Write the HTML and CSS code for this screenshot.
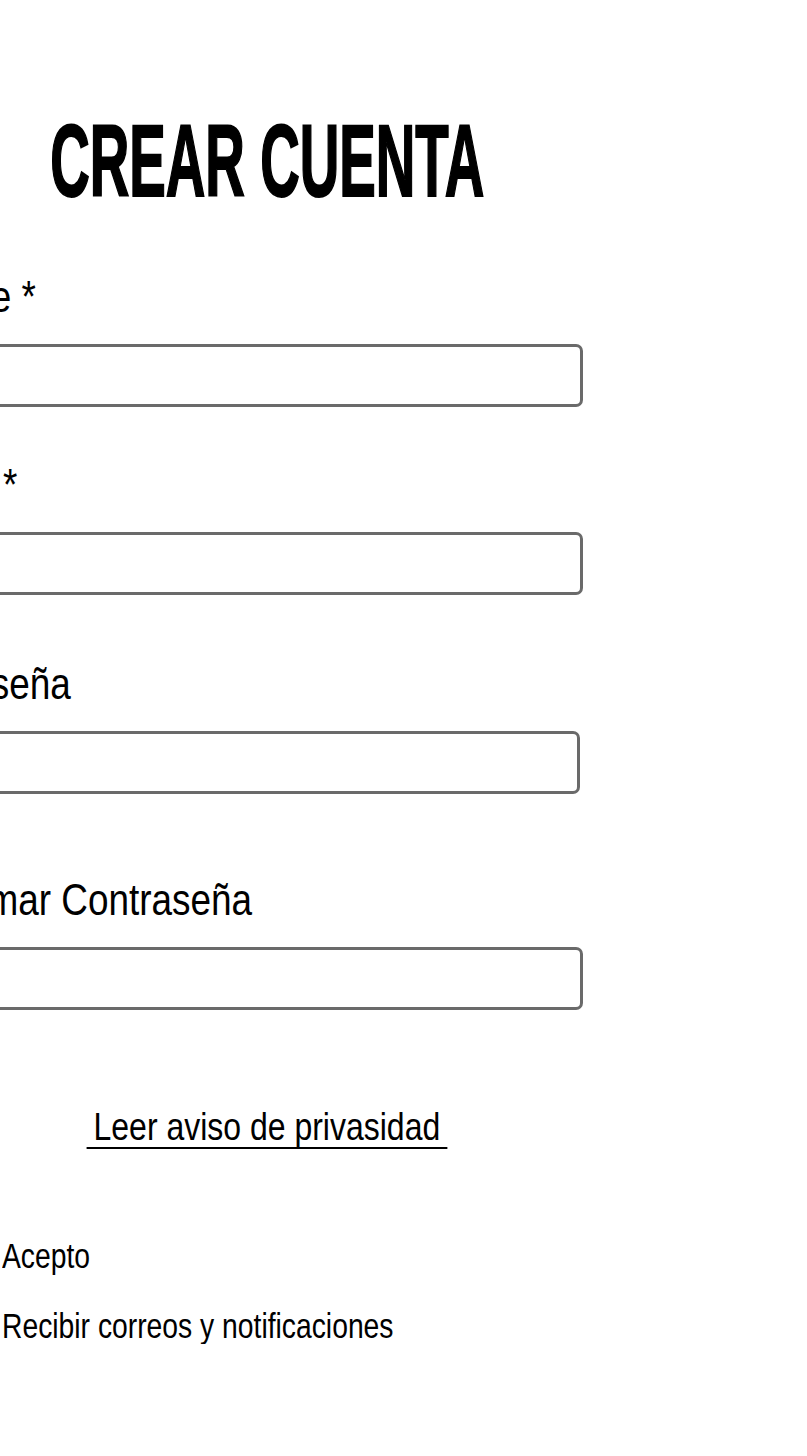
FILE: index.html
```html
<!DOCTYPE html>
<html lang="es">
<head>
<meta charset="utf-8">
<title>Crear cuenta</title>
<link rel="stylesheet" href="styles.css">
</head>
<body>
<form class="signup">
  <h1 class="signup__title"><span class="signup__title-text">CREAR CUENTA</span></h1>

  <div class="field field--name">
    <label class="field__label" for="nombre"><span class="narrow">Nombre *</span></label>
    <input class="field__input" id="nombre" type="text">
  </div>

  <div class="field field--mail">
    <label class="field__label" for="correo"><span class="narrow">Correo *</span></label>
    <input class="field__input" id="correo" type="email">
  </div>

  <div class="field field--pass">
    <label class="field__label" for="pass"><span class="narrow">Contraseña</span></label>
    <input class="field__input field__input--short" id="pass" type="password">
  </div>

  <div class="field field--confirm">
    <label class="field__label field__label--indent" for="pass2"><span class="narrow">Confirmar Contraseña</span></label>
    <input class="field__input" id="pass2" type="password">
  </div>

  <div class="privacy">
    <a class="privacy__link" href="#">Leer aviso de privasidad</a>
  </div>

  <div class="checks">
    <label class="check"><input class="check__box" type="checkbox"><span class="narrow">Acepto</span></label>
    <label class="check"><input class="check__box" type="checkbox"><span class="narrow">Recibir correos y notificaciones</span></label>
  </div>
</form>
</body>
</html>
```

FILE: styles.css
```css
html, body {
  margin: 0;
  padding: 0;
  background: #ffffff;
  overflow: hidden;
}

body {
  font-family: "Liberation Sans", Arial, sans-serif;
  color: #000000;
}

.narrow {
  display: inline-block;
  white-space: nowrap;
  transform: scaleX(0.82);
  transform-origin: left center;
}

.signup {
  width: 774px;
  margin-left: -120px;
  padding-top: 110px;
  display: flex;
  flex-direction: column;
}

.signup__title {
  margin: 0;
  display: flex;
  justify-content: center;
  white-space: nowrap;
  font-size: 102px;
  line-height: 102px;
  font-weight: 700;
  font-family: "Liberation Sans", Arial, sans-serif;
}

.signup__title-text {
  display: inline-block;
  flex: none;
  transform: scaleX(0.537);
  transform-origin: center;
  -webkit-text-stroke: 2px #000000;
}

.field {
  display: flex;
  flex-direction: column;
  align-items: flex-start;
}

.field--name { margin-top: 62px; }
.field--mail { margin-top: 55px; }
.field--pass { margin-top: 66px; }
.field--confirm { margin-top: 83px; }

.field__label {
  font-size: 45px;
  line-height: 45px;
  margin-bottom: 25px;
}

.field__label--indent {
  margin-left: 9px;
}

.field__input {
  box-sizing: border-box;
  width: 703px;
  height: 63px;
  margin: 0;
  border: 3px solid #6a6a6a;
  border-radius: 7px;
  background: #ffffff;
  font: inherit;
  font-size: 30px;
  padding: 0 16px;
}

.field__input--short {
  width: 700px;
}

.privacy {
  margin-top: 97px;
  display: flex;
  justify-content: center;
}

.privacy__link {
  display: inline-block;
  flex: none;
  white-space: nowrap;
  font-size: 39px;
  line-height: 40px;
  padding: 0 8.5px;
  color: #000000;
  text-decoration: none;
  border-bottom: 2px solid #000000;
  transform: scaleX(0.82);
  transform-origin: center;
}

.checks {
  margin-top: 90px;
  display: flex;
  flex-direction: column;
  gap: 35px;
}

.check {
  display: flex;
  align-items: center;
  padding-left: 95px;
  font-size: 34.5px;
  line-height: 35px;
}

.check__box {
  flex: none;
  width: 18px;
  height: 18px;
  margin: 0 9px 0 0;
}
```
